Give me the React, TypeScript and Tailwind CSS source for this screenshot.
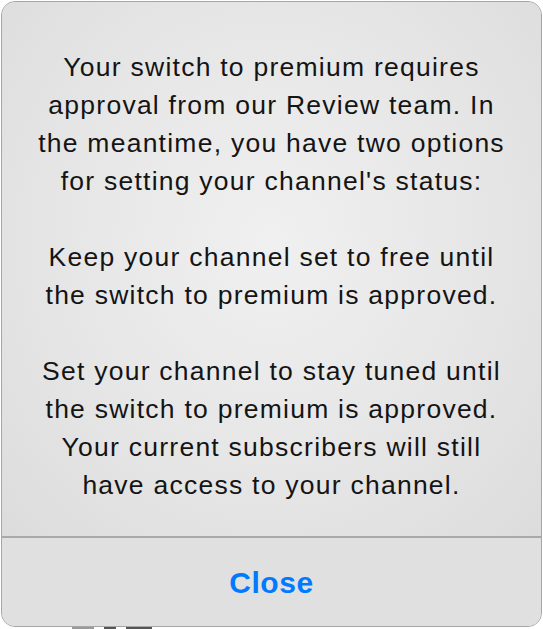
import React from "react";

export default function App() {
  return (
    <div className="w-[543px] h-[629px] bg-white relative overflow-hidden" style={{ fontFamily: '"Liberation Sans", Arial, sans-serif' }}>
      <div className="absolute left-[72px] bottom-0 h-[3px] flex gap-[10px]">
        <div className="w-[22px] h-[2px] bg-[#9a9a9a] mt-[1px]" />
        <div className="w-[12px] h-[3px] bg-[#555]" />
        <div className="w-[26px] h-[3px] bg-[#555]" />
      </div>
      <div className="mx-[1px] mt-[1px] h-[626px] rounded-[14px] border border-[#a6a6a6] overflow-hidden flex flex-col relative bg-[#e0e0e0]">
        <div
          className="flex-1 border-b-2 border-[#a9a9a9] pt-[46px] text-center text-[26.5px] leading-[38px] tracking-[1.25px] text-[#141414]"
          style={{ background: "radial-gradient(ellipse at 50% 45%, #f0f0f0 0%, #e6e6e6 55%, #dcdcdc 100%)" }}
        >
          <p>
            Your switch to premium requires
            <br />
            approval from our Review team. In
            <br />
            the meantime, you have two options
            <br />
            for setting your channel's status:
          </p>
          <p className="mt-[38px]">
            Keep your channel set to free until
            <br />
            the switch to premium is approved.
          </p>
          <p className="mt-[38px]">
            Set your channel to stay tuned until
            <br />
            the switch to premium is approved.
            <br />
            Your current subscribers will still
            <br />
            have access to your channel.
          </p>
        </div>
        <div className="h-[88px] flex items-center justify-center bg-[#e0e0e0]">
          <span className="text-[30px] font-bold text-[#007aff] tracking-[0.6px]">Close</span>
        </div>
      </div>
    </div>
  );
}
